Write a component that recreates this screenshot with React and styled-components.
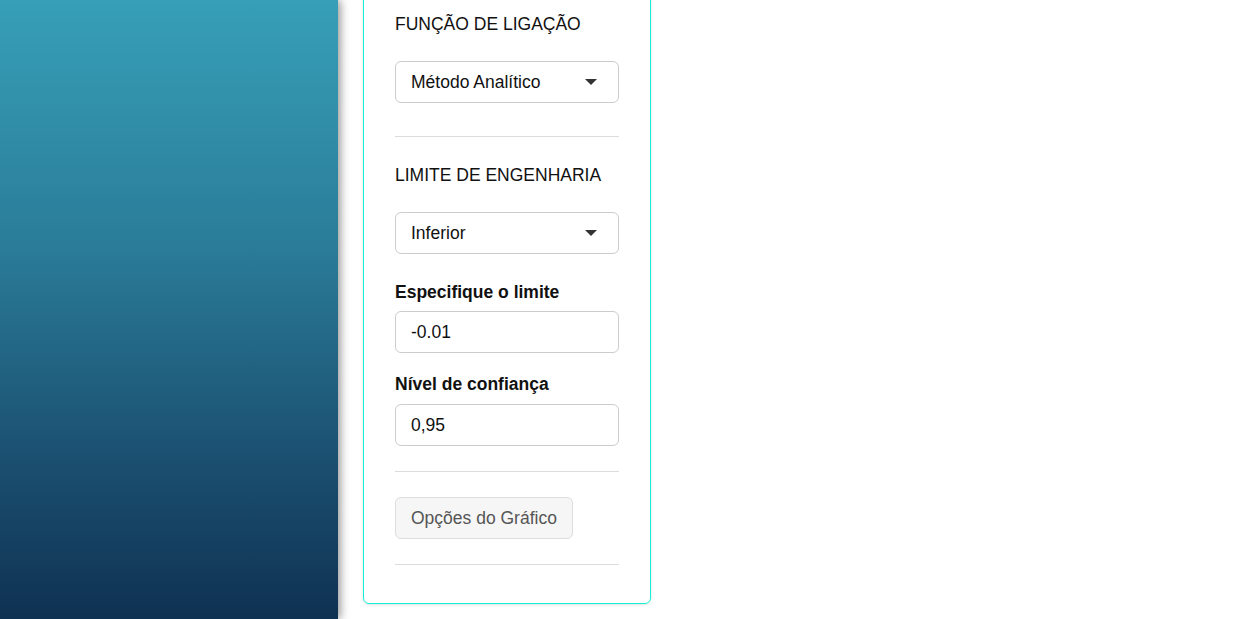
import React from "react";
import styled, { createGlobalStyle } from "styled-components";

const GlobalStyle = createGlobalStyle`
   html, body {
      margin: 0;
      padding: 0;
      background: #fff;
      font-family: "Liberation Sans", Arial, sans-serif;
      color: #111;
      overflow: hidden;
   }
   * {
      box-sizing: border-box;
   }
`;

const Page = styled.div`
   display: flex;
   height: 100vh;
   width: 100%;
`;

const Sidebar = styled.aside`
   flex: 0 0 338px;
   height: 100%;
   background: linear-gradient(to bottom, #379fb8 0%, #2a7c98 40%, #1c5273 72%, #0f3152 100%);
   box-shadow: 2px 0 9px rgba(0, 0, 0, 0.45);
   position: relative;
   z-index: 1;
`;

const Main = styled.main`
   flex: 1;
   padding-left: 25px;
   overflow: hidden;
`;

const Panel = styled.section`
   width: 288px;
   margin-top: -19px;
   padding: 32px 31px 38px;
   border: 1px solid #14f0d2;
   border-radius: 6px;
   box-shadow: 0 1px 3px rgba(0, 0, 0, 0.12);
   display: flex;
   flex-direction: column;
`;

const SectionTitle = styled.h3`
   margin: 0 0 27px;
   font-size: 17.5px;
   line-height: 20px;
   font-weight: 400;
   text-transform: uppercase;
   color: #111;
`;

const Divider = styled.hr`
   width: 100%;
   margin: ${(p) => p.$top ?? 33}px 0 ${(p) => p.$bottom ?? 28}px;
   border: none;
   border-top: 1px solid #dcdcdc;
`;

const SelectBox = styled.div`
   display: flex;
   align-items: center;
   justify-content: space-between;
   height: 42px;
   padding: 0 21px 0 15px;
   border: 1px solid #ccc;
   border-radius: 6px;
   font-size: 17.5px;
   color: #111;
   background: #fff;
   cursor: pointer;
`;

const Caret = styled.span`
   width: 0;
   height: 0;
   border-left: 6.5px solid transparent;
   border-right: 6.5px solid transparent;
   border-top: 6px solid #333;
`;

const Label = styled.label`
   display: block;
   font-size: 17.5px;
   line-height: 20px;
   font-weight: 700;
   margin: ${(p) => p.$top ?? 0}px 0 ${(p) => p.$bottom ?? 9}px;
   color: #111;
`;

const Input = styled.input`
   width: 100%;
   height: 42px;
   padding: 0 15px;
   border: 1px solid #ccc;
   border-radius: 6px;
   font-family: inherit;
   font-size: 17.5px;
   color: #111;
   outline: none;
`;

const GhostButton = styled.button`
   align-self: flex-start;
   height: 42px;
   padding: 0 15px;
   border: 1px solid #ddd;
   border-radius: 6px;
   background: #f6f6f6;
   color: #555;
   font-family: inherit;
   font-size: 17.5px;
   cursor: pointer;
`;

const Select = ({ value }) => (
   <SelectBox>
      <span>{value}</span>
      <Caret />
   </SelectBox>
);

export default function App() {
   return (
      <>
         <GlobalStyle />
         <Page>
            <Sidebar />
            <Main>
               <Panel>
                  <SectionTitle>Função de ligação</SectionTitle>
                  <Select value="Método Analítico" />
                  <Divider />
                  <SectionTitle>Limite de engenharia</SectionTitle>
                  <Select value="Inferior" />
                  <Label $top={28}>Especifique o limite</Label>
                  <Input defaultValue="-0.01" />
                  <Label $top={21} $bottom={10}>Nível de confiança</Label>
                  <Input defaultValue="0,95" />
                  <Divider $top={25} $bottom={25} />
                  <GhostButton>Opções do Gráfico</GhostButton>
                  <Divider $top={25} $bottom={0} />
               </Panel>
            </Main>
         </Page>
      </>
   );
}
